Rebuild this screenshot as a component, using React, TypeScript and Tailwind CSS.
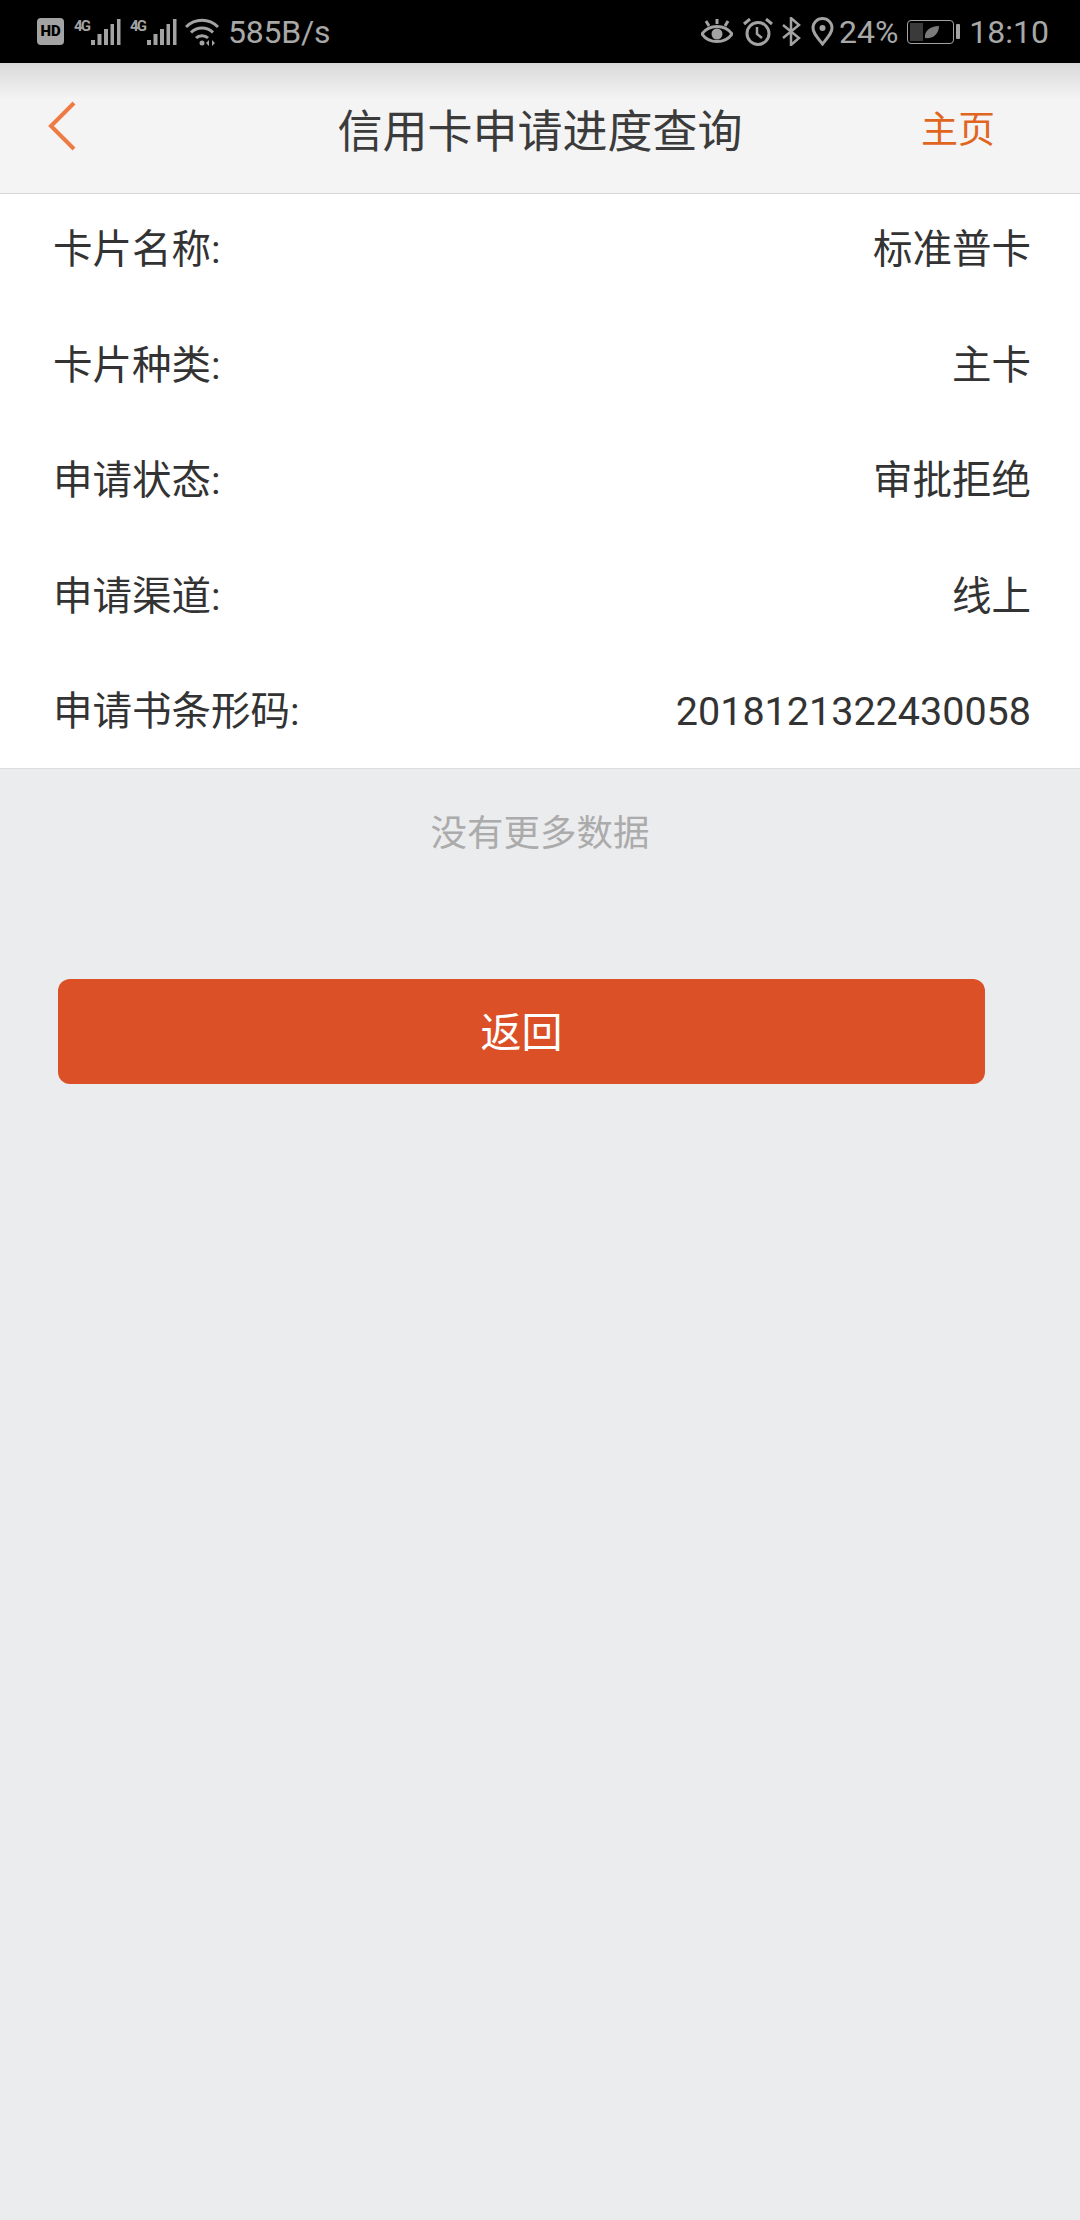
const rows = [
  { label: "卡片名称:", value: "标准普卡" },
  { label: "卡片种类:", value: "主卡" },
  { label: "申请状态:", value: "审批拒绝" },
  { label: "申请渠道:", value: "线上" },
  { label: "申请书条形码:", value: "2018121322430058" },
];

const Signal = () => (
  <svg width="47" height="28" viewBox="0 0 47 28" className="block">
    <text x="0" y="13" fontSize="15" fontWeight="700" fill="#a3a3a3" fontFamily="Roboto, sans-serif" textLength="17">
      4G
    </text>
    <rect x="17" y="22" width="4" height="5" fill="#a3a3a3" />
    <rect x="23.5" y="16" width="4" height="11" fill="#a3a3a3" />
    <rect x="30" y="11" width="4" height="16" fill="#a3a3a3" />
    <rect x="36.5" y="6" width="3.5" height="21" fill="#a3a3a3" />
    <rect x="43" y="1" width="3.5" height="26" fill="#a3a3a3" />
  </svg>
);

const App = () => {
  return (
    <div className="flex flex-col w-[1080px] h-[2220px] bg-[#ebecee] font-['Noto_Sans_CJK_SC',sans-serif]">
      {/* status bar */}
      <div className="flex h-[63px] items-center justify-between bg-black pl-[37px] pr-[31px] text-[#a8a8a8] font-['Roboto','Noto_Sans_CJK_SC',sans-serif]">
        <div className="flex items-center">
          <div className="flex h-[27px] w-[27px] items-center justify-center rounded-[4px] bg-[#a3a3a3] text-[15px] font-black leading-none text-black">
            HD
          </div>
          <div className="ml-[10px]">
            <Signal />
          </div>
          <div className="ml-[9px]">
            <Signal />
          </div>
          <svg width="34" height="28" viewBox="0 0 34 28" className="ml-[8px]" fill="none" stroke="#a3a3a3" strokeWidth="3">
            <path d="M1 9C10 0 24 0 33 9" />
            <path d="M6 14.5C12 8.5 22 8.5 28 14.5" />
            <path d="M11 20C14 17 20 17 23 20" />
            <circle cx="17" cy="25" r="2.5" fill="#a3a3a3" stroke="none" />
            <path d="M24 22v6l-3-3zM27 22v6l3-3z" fill="#a3a3a3" stroke="none" />
          </svg>
          <span className="ml-[9px] text-[32px] leading-none tracking-[-0.2px]">585B/s</span>
        </div>
        <div className="flex items-center">
          <svg width="32" height="27" viewBox="0 0 32 27" fill="none" stroke="#a3a3a3" strokeWidth="3">
            <path d="M1 16C8 6 24 6 31 16C24 26 8 26 1 16Z" />
            <circle cx="16" cy="16" r="5.5" fill="#a3a3a3" stroke="none" />
            <path d="M16 1v5M5 3l3 5M27 3l-3 5" />
          </svg>
          <svg width="30" height="28" viewBox="0 0 30 28" className="ml-[10px]" fill="none" stroke="#a3a3a3" strokeWidth="3">
            <circle cx="15" cy="15.5" r="11" />
            <path d="M14 9v7l5 4" strokeWidth="2.5" />
            <path d="M1 6l6-5M29 6l-6-5" />
          </svg>
          <svg width="19" height="29" viewBox="0 0 19 29" className="ml-[9px]" fill="none" stroke="#a3a3a3" strokeWidth="2.5">
            <path d="M1 8l16 13-8 7V1l8 7L1 21" />
          </svg>
          <svg width="23" height="29" viewBox="0 0 23 29" className="ml-[10px]" fill="none" stroke="#a3a3a3" strokeWidth="3">
            <path d="M11.5 27C6 20 2 16 2 11a9.5 9.5 0 0 1 19 0C21 16 17 20 11.5 27Z" />
            <circle cx="11.5" cy="11" r="3" fill="#a3a3a3" stroke="none" />
          </svg>
          <span className="ml-[5px] text-[32px] leading-none">24%</span>
          <div className="ml-[9px] flex h-[24px] w-[47px] items-center rounded-[4px] border border-[#a3a3a3] p-[2px]">
            <div className="h-full w-[13px] bg-[#3a3a3a]" />
            <svg width="16" height="14" viewBox="0 0 16 14" className="ml-[1px]">
              <path d="M1 13C0 6 6 1 15 1C15 9 9 14 1 13Z" fill="#7a7a7a" />
            </svg>
          </div>
          <div className="ml-[2px] h-[15px] w-[4px] rounded-[1px] bg-[#a3a3a3]" />
          <span className="ml-[9px] text-[32px] leading-none">18:10</span>
        </div>
      </div>

      {/* header */}
      <div className="grid h-[131px] grid-cols-[1fr_auto_1fr] items-center border-b border-[#d6d6d6] bg-gradient-to-b from-[#d9d9d9] via-[#f4f4f4] via-[28%] to-[#f4f4f4]">
        <svg width="30" height="50" viewBox="0 0 30 50" fill="none" stroke="#ee7b43" strokeWidth="4" className="ml-[47px] -mt-[4px]">
          <path d="M27 2L4 25l23 23" />
        </svg>
        <h1 className="text-[45px] font-normal leading-none text-[#3b3b3b]">信用卡申请进度查询</h1>
        <span className="justify-self-end pb-[2px] pr-[85px] text-[37px] leading-none text-[#e0661f]">主页</span>
      </div>

      {/* detail rows */}
      <div className="flex h-[575px] flex-col border-b border-[#dcdddf] bg-white">
        {rows.map((row) => (
          <div
            key={row.label}
            className="flex h-[115.5px] shrink-0 items-center justify-between pl-[53px] pr-[49px] pb-[4px] font-['Roboto','Noto_Sans_CJK_SC',sans-serif] text-[39.5px] leading-none text-[#333333]"
          >
            <span>{row.label}</span>
            <span>{row.value}</span>
          </div>
        ))}
      </div>

      <p className="mt-[41px] text-center text-[36.5px] leading-[42px] text-[#ababab]">没有更多数据</p>

      <button className="ml-[58px] mt-[127px] flex h-[105px] w-[927px] items-center justify-center rounded-[12px] bg-[#dc5028] pb-[4px] text-[41px] leading-none text-white">
        返回
      </button>
    </div>
  );
};

export default App;
